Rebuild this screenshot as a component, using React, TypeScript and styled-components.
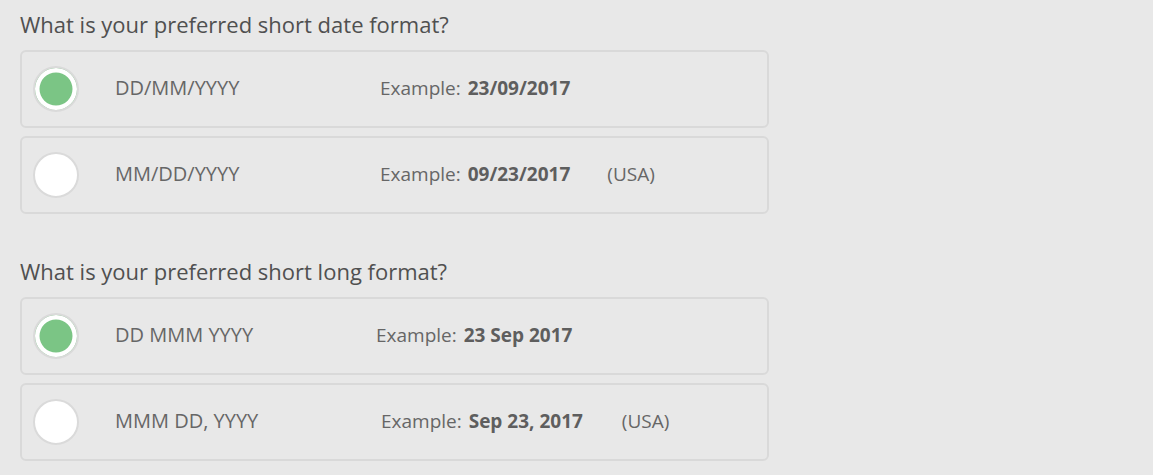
import React from 'react';
import styled, {createGlobalStyle} from 'styled-components';

type Option = {
  format: string,
  example: string,
  note?: string,
  selected?: boolean,
  labelWidth: number,
  noteGap: number,
};

const QUESTIONS: {title: string, options: Option[]}[] = [
  {
    title: 'What is your preferred short date format?',
    options: [
      {format: 'DD/MM/YYYY', example: '23/09/2017', selected: true, labelWidth: 265, noteGap: 37},
      {format: 'MM/DD/YYYY', example: '09/23/2017', note: '(USA)', labelWidth: 265, noteGap: 37},
    ],
  },
  {
    title: 'What is your preferred short long format?',
    options: [
      {format: 'DD MMM YYYY', example: '23 Sep 2017', selected: true, labelWidth: 261, noteGap: 37},
      {format: 'MMM DD, YYYY', example: 'Sep 23, 2017', note: '(USA)', labelWidth: 266, noteGap: 39},
    ],
  },
];

export default function App() {
  return (
    <>
      <GlobalStyle/>
      <Page>
        {QUESTIONS.map((q, i) => (
          <Question key={i}>
            <Title>{q.title}</Title>
            {q.options.map((o, j) => (
              <Card key={j}>
                <Radio $selected={!!o.selected}/>
                <Format $width={o.labelWidth}>{o.format}</Format>
                <Example>
                  Example: <b>{o.example}</b>
                </Example>
                {o.note ? <Note $gap={o.noteGap}>{o.note}</Note> : null}
              </Card>
            ))}
          </Question>
        ))}
      </Page>
    </>
  );
}

const GlobalStyle = createGlobalStyle`
  html, body { margin: 0; background: #e8e8e8; }
  body { font-family: "Open Sans", "Noto Sans", sans-serif; }
`;

const Page = styled.div`
  width: 1153px;
  height: 475px;
  padding: 9px 0 0 20px;
  box-sizing: border-box;
  display: flex;
  flex-direction: column;
  gap: 42px;
  overflow: hidden;
`;

const Question = styled.div`
  width: 749px;
  display: flex;
  flex-direction: column;
  gap: 8px;
`;

const Title = styled.div`
  font-size: 22px;
  line-height: 30px;
  color: #505050;
  margin-bottom: 3px;
`;

const Card = styled.div`
  height: 78px;
  box-sizing: border-box;
  border: 2px solid #d9d9d9;
  border-radius: 6px;
  display: flex;
  align-items: center;
  padding: 0 0 0 11px;
  color: #666;
  font-size: 19px;
`;

const Radio = styled.div<{$selected: boolean}>`
  width: 46px;
  height: 46px;
  box-sizing: border-box;
  border-radius: 50%;
  background: ${p => p.$selected ? '#7bc585' : '#fff'};
  border: 2px solid #dadada;
  box-shadow: inset 0 0 0 4.5px #fff;
  flex: none;
  margin-right: 36px;
`;

const Format = styled.div<{$width: number}>`
  width: ${p => p.$width}px;
  flex: none;
  font-size: 20px;
  margin-bottom: 3px;
`;

const Example = styled.div`
  margin-bottom: 3px;
  b {
    font-weight: 700;
    color: #5e5e5e;
    margin-left: 2px;
  }
`;

const Note = styled.div<{$gap: number}>`
  margin-left: ${p => p.$gap}px;
  margin-bottom: 3px;
`;
